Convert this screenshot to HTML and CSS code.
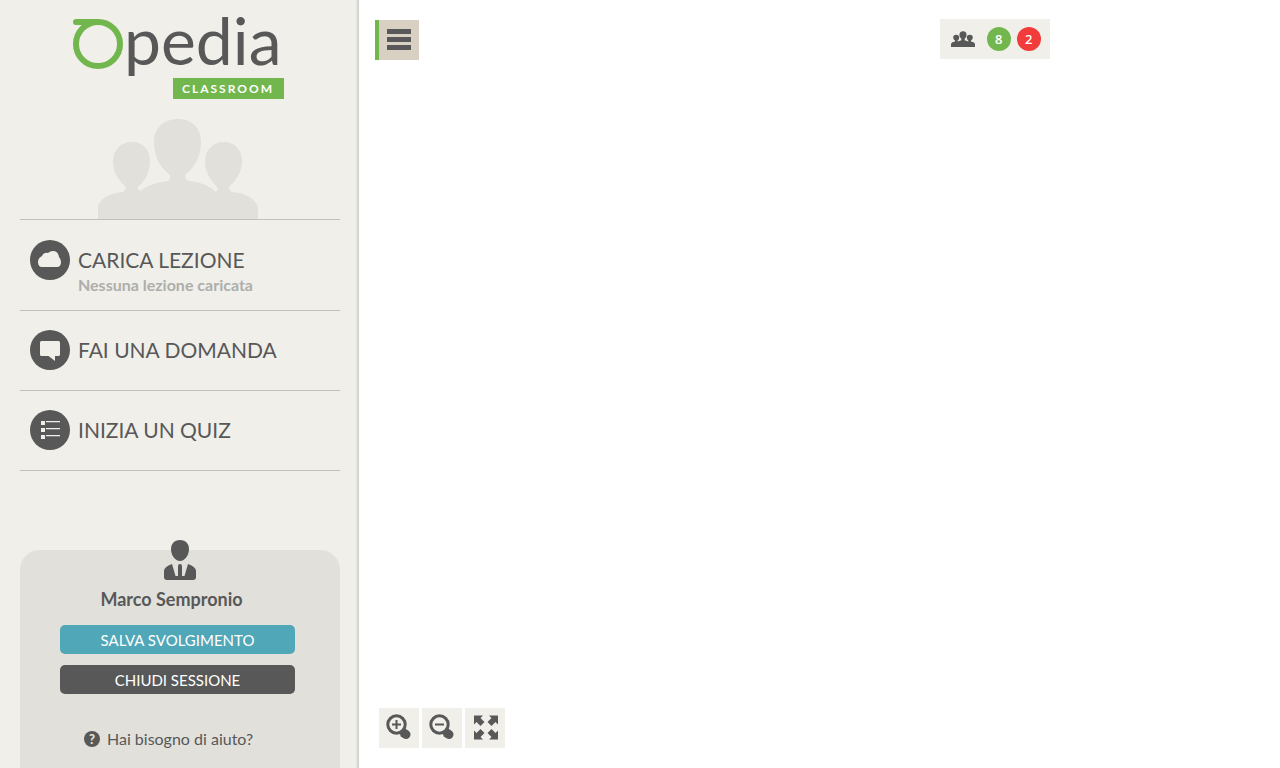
FILE: index.html
```html
<!DOCTYPE html>
<html lang="it">
<head>
<meta charset="utf-8">
<meta name="viewport" content="width=device-width, initial-scale=1">
<title>Opedia Classroom</title>
<link rel="stylesheet" href="styles.css">
</head>
<body>
<div class="app">
  <aside class="sidebar">
    <svg class="logo" viewBox="0 0 232 100" role="img" aria-label="Opedia Classroom">
      <g class="logo-mark">
        <circle cx="27" cy="44" r="22"/>
        <path d="M5 22H27"/>
      </g>
      <text class="logo-word" x="53" y="65">pedia</text>
      <rect class="logo-tag" x="102" y="78" width="111" height="21"/>
      <text class="logo-sub" x="111" y="93">CLASSROOM</text>
    </svg>
    <svg class="crowd" viewBox="0 0 160 101" aria-hidden="true">
      <path d="M0 101V91C0 82 10 75 25 74Q28 72 28 69C21 63 15 55 15 43C15 32 23 24 34 24S52 32 52 43C52 54 47 63 40 69Q39 71 42 73C50 67 60 64 70 63Q73 60 72 57C61 49 56 37 56 24C56 10 66 1 80 1S103 10 103 24C103 37 98 48 87 57Q87 61 90 63C101 64 111 67 118 74Q121 71 119 69C112 62 107 54 107 43C107 32 115 24 126 24S144 32 144 43C144 54 138 63 131 69Q131 73 134 74C149 75 160 83 160 91V101Z"/>
    </svg>
    <nav class="menu">
      <a class="item item-tall" href="#lezione">
        <svg class="item-icon" viewBox="0 0 40 40" aria-hidden="true">
          <circle class="disc" cx="20" cy="20" r="20"/>
          <path class="glyph" d="M12 27Q8 27 8 22Q8 18 12 16Q14 12 18 13Q20 11 23 11Q28 11 29 17Q31 19 31 22Q31 27 27 27Z"/>
        </svg>
        <span class="item-text"><span class="item-title">CARICA LEZIONE</span><span class="item-note">Nessuna lezione caricata</span></span>
      </a>
      <a class="item" href="#domanda">
        <svg class="item-icon" viewBox="0 0 40 40" aria-hidden="true">
          <circle class="disc" cx="20" cy="20" r="20"/>
          <path class="glyph" d="M11.500 11H28.500Q30 11 30 12.500V24.500Q30 26 28.500 26H25V31L18.500 26H11.500Q10 26 10 24.500V12.500Q10 11 11.500 11Z"/>
        </svg>
        <span class="item-text"><span class="item-title">FAI UNA DOMANDA</span></span>
      </a>
      <a class="item" href="#quiz">
        <svg class="item-icon" viewBox="0 0 40 40" aria-hidden="true">
          <circle class="disc" cx="20" cy="20" r="20"/>
          <path class="glyph" d="M11 11h4v4h-4zM11 18h4v4h-4zM11 25h4v4h-4zM16 11h14v1.300H16zM16 18h14v1.300H16zM16 25h14v1.300H16z"/>
        </svg>
        <span class="item-text"><span class="item-title">INIZIA UN QUIZ</span></span>
      </a>
    </nav>
    <section class="account">
      <svg class="avatar" viewBox="0 0 32 40" aria-hidden="true">
        <path d="M16 0C22 0 25 4 25 9C25 15 21 21 16 21S7 15 7 9C7 4 10 0 16 0ZM8 24L11.500 36H14V26Q14 24 16 24T18 26V36H20.500L24 24Q32 27 32 31V37Q32 40 29 40H3Q0 40 0 37V31Q0 27 8 24Z"/>
      </svg>
      <p class="name">Marco Sempronio</p>
      <button class="btn btn-save" type="button">SALVA SVOLGIMENTO</button>
      <button class="btn btn-close" type="button">CHIUDI SESSIONE</button>
      <a class="help" href="#aiuto"><span class="help-mark" aria-hidden="true">?</span>Hai bisogno di aiuto?</a>
    </section>
  </aside>
  <main class="stage">
    <header class="topbar">
      <button class="burger" type="button" aria-label="Menu">
        <span class="bar"></span><span class="bar"></span><span class="bar"></span>
      </button>
      <div class="presence">
        <svg class="people" viewBox="0 0 24 16" aria-hidden="true">
          <path d="M0 16V13.500Q0 11.300 4 10.600V9.500Q2.200 8.500 2.200 6.500Q2.200 3.700 5.200 3.700T8.200 6.500Q8.200 8.500 6.700 9.500V10.500L10.300 9.200V7.800Q8.400 6.300 8.400 4Q8.400 0.200 12 0.200T15.600 4Q15.600 6.300 13.700 7.800V9.200L17.300 10.500V9.500Q15.800 8.500 15.800 6.500Q15.800 3.700 18.800 3.700T21.800 6.500Q21.800 8.500 20 9.500V10.600Q24 11.300 24 13.500V16Z"/>
        </svg>
        <span class="count count-on">8</span>
        <span class="count count-off">2</span>
      </div>
    </header>
    <div class="tools">
      <button class="tool" type="button" aria-label="Ingrandisci">
        <svg viewBox="0 0 40 40" aria-hidden="true">
          <circle class="lens" cx="17.500" cy="16.500" r="8.700"/>
          <path class="handle" d="M23.500 22.500L25 24"/><path class="knob" d="M25.500 25.500L27 26.500"/>
          <path class="sign" d="M13 16.500H22M17.500 12V21"/>
        </svg>
      </button>
      <button class="tool" type="button" aria-label="Riduci">
        <svg viewBox="0 0 40 40" aria-hidden="true">
          <circle class="lens" cx="17.500" cy="16.500" r="8.700"/>
          <path class="handle" d="M23.500 22.500L25 24"/><path class="knob" d="M25.500 25.500L27 26.500"/>
          <path class="sign" d="M13 16.500H22"/>
        </svg>
      </button>
      <button class="tool" type="button" aria-label="Schermo intero">
        <svg viewBox="0 0 40 40" aria-hidden="true">
          <path class="solid" d="M9 7.500H18L15.500 10L19.500 14L15.500 18L11.500 14L9 16.500ZM33 7.500H24L26.500 10L22.500 14L26.500 18L30.500 14L33 16.500ZM9 31.500H18L15.500 29L19.500 25L15.500 21L11.500 25L9 22.500ZM33 31.500H24L26.500 29L22.500 25L26.500 21L30.500 25L33 22.500Z"/>
        </svg>
      </button>
    </div>
  </main>
</div>
</body>
</html>
```
FILE: styles.css
```css
* { box-sizing: border-box; }
body { margin: 0; background: #fff; color: #585858; font-family: Lato, "Open Sans", sans-serif; }
button { font-family: inherit; border: 0; padding: 0; cursor: pointer; }
a { color: inherit; text-decoration: none; }
.app { display: flex; min-height: 100vh; }

.sidebar { display: flex; flex-direction: column; flex: none; width: 359px; padding: 0 19px 0 20px; background: #f0efea; box-shadow: inset -3px 0 2px -1px #cfcfca; }
.logo { width: 232px; height: 100px; margin-left: 51px; overflow: visible; }
.logo-mark { fill: none; stroke: #72b74e; stroke-width: 6; stroke-linecap: round; }
.logo-word { fill: #585858; font-size: 66px; }
.logo-tag { fill: #72b74e; }
.logo-sub { fill: #fff; font-size: 12px; font-weight: 700; letter-spacing: 2px; }
.crowd { width: 160px; height: 101px; margin: 18px 0 0 78px; fill: #e1e0db; }

.menu { border-top: 1px solid #c1c0bb; }
.item { display: flex; gap: 8px; height: 80px; padding: 19px 10px; border-bottom: 1px solid #c1c0bb; }
.item-tall { height: 91px; padding-top: 20px; }
.item-icon { flex: none; width: 40px; height: 40px; }
.disc { fill: #585858; }
.glyph { fill: #f0efea; }
.item-text { display: flex; flex-direction: column; white-space: nowrap; }
.item-title { font-size: 21px; line-height: 40px; }
.item-note { font-size: 16px; font-weight: 700; line-height: 10px; color: #aeaeaa; }

.account { display: flex; flex-direction: column; flex: 1; margin-top: 79px; padding: 0 45px 16px 40px; border-radius: 20px 20px 0 0; background: #e1e0db; }
.avatar { align-self: center; width: 32px; height: 40px; margin: -10px 0 0 4px; fill: #585858; }
.name { margin: 8px 0 15px; padding-right: 12px; font-size: 18px; font-weight: 700; line-height: 22px; text-align: center; }
.btn { height: 29px; margin-bottom: 11px; border-radius: 5px; color: #fff; font-size: 15px; line-height: 28px; }
.btn-save { background: #50a7b8; }
.btn-close { background: #585858; }
.help { display: flex; align-items: center; gap: 7px; margin: 24px 0 0 24px; font-size: 16px; line-height: 20px; }
.help-mark { width: 16px; height: 16px; border-radius: 50%; background: #585858; color: #e1e0db; font-size: 13px; font-weight: 900; line-height: 16px; text-align: center; }

.stage { display: flex; flex: 1; flex-direction: column; justify-content: space-between; min-width: 0; }
.topbar { display: flex; align-items: flex-start; justify-content: space-between; padding: 19px 25% 0 16px; }
.burger { display: flex; flex-direction: column; gap: 3px; width: 44px; height: 40px; margin-top: 1px; padding: 9px 8px; border-left: 4px solid #72b74e; background: #d8d0c2; }
.bar { width: 24px; height: 5px; background: #585858; }
.presence { display: flex; align-items: center; gap: 6px; height: 40px; padding: 0 9px 0 11px; background: #f0efea; }
.people { width: 24px; height: 16px; margin-right: 6px; fill: #585858; }
.count { width: 24px; height: 24px; border-radius: 50%; color: #fff; font: 600 13px/24px "Open Sans", sans-serif; text-align: center; }
.count-on { background: #72b74e; }
.count-off { background: #f23c3c; }

.tools { display: flex; gap: 3px; padding: 0 20px 20px; }
.tool { width: 40px; height: 40px; background: #f0efea; }
.tool svg { display: block; width: 40px; height: 40px; }
.lens { fill: none; stroke: #585858; stroke-width: 3; }
.handle { stroke: #585858; stroke-width: 7; }
.knob { fill: none; stroke: #585858; stroke-width: 9; stroke-linecap: round; }
.solid { fill: #585858; }
.sign { fill: none; stroke: #585858; stroke-width: 2; }
```
